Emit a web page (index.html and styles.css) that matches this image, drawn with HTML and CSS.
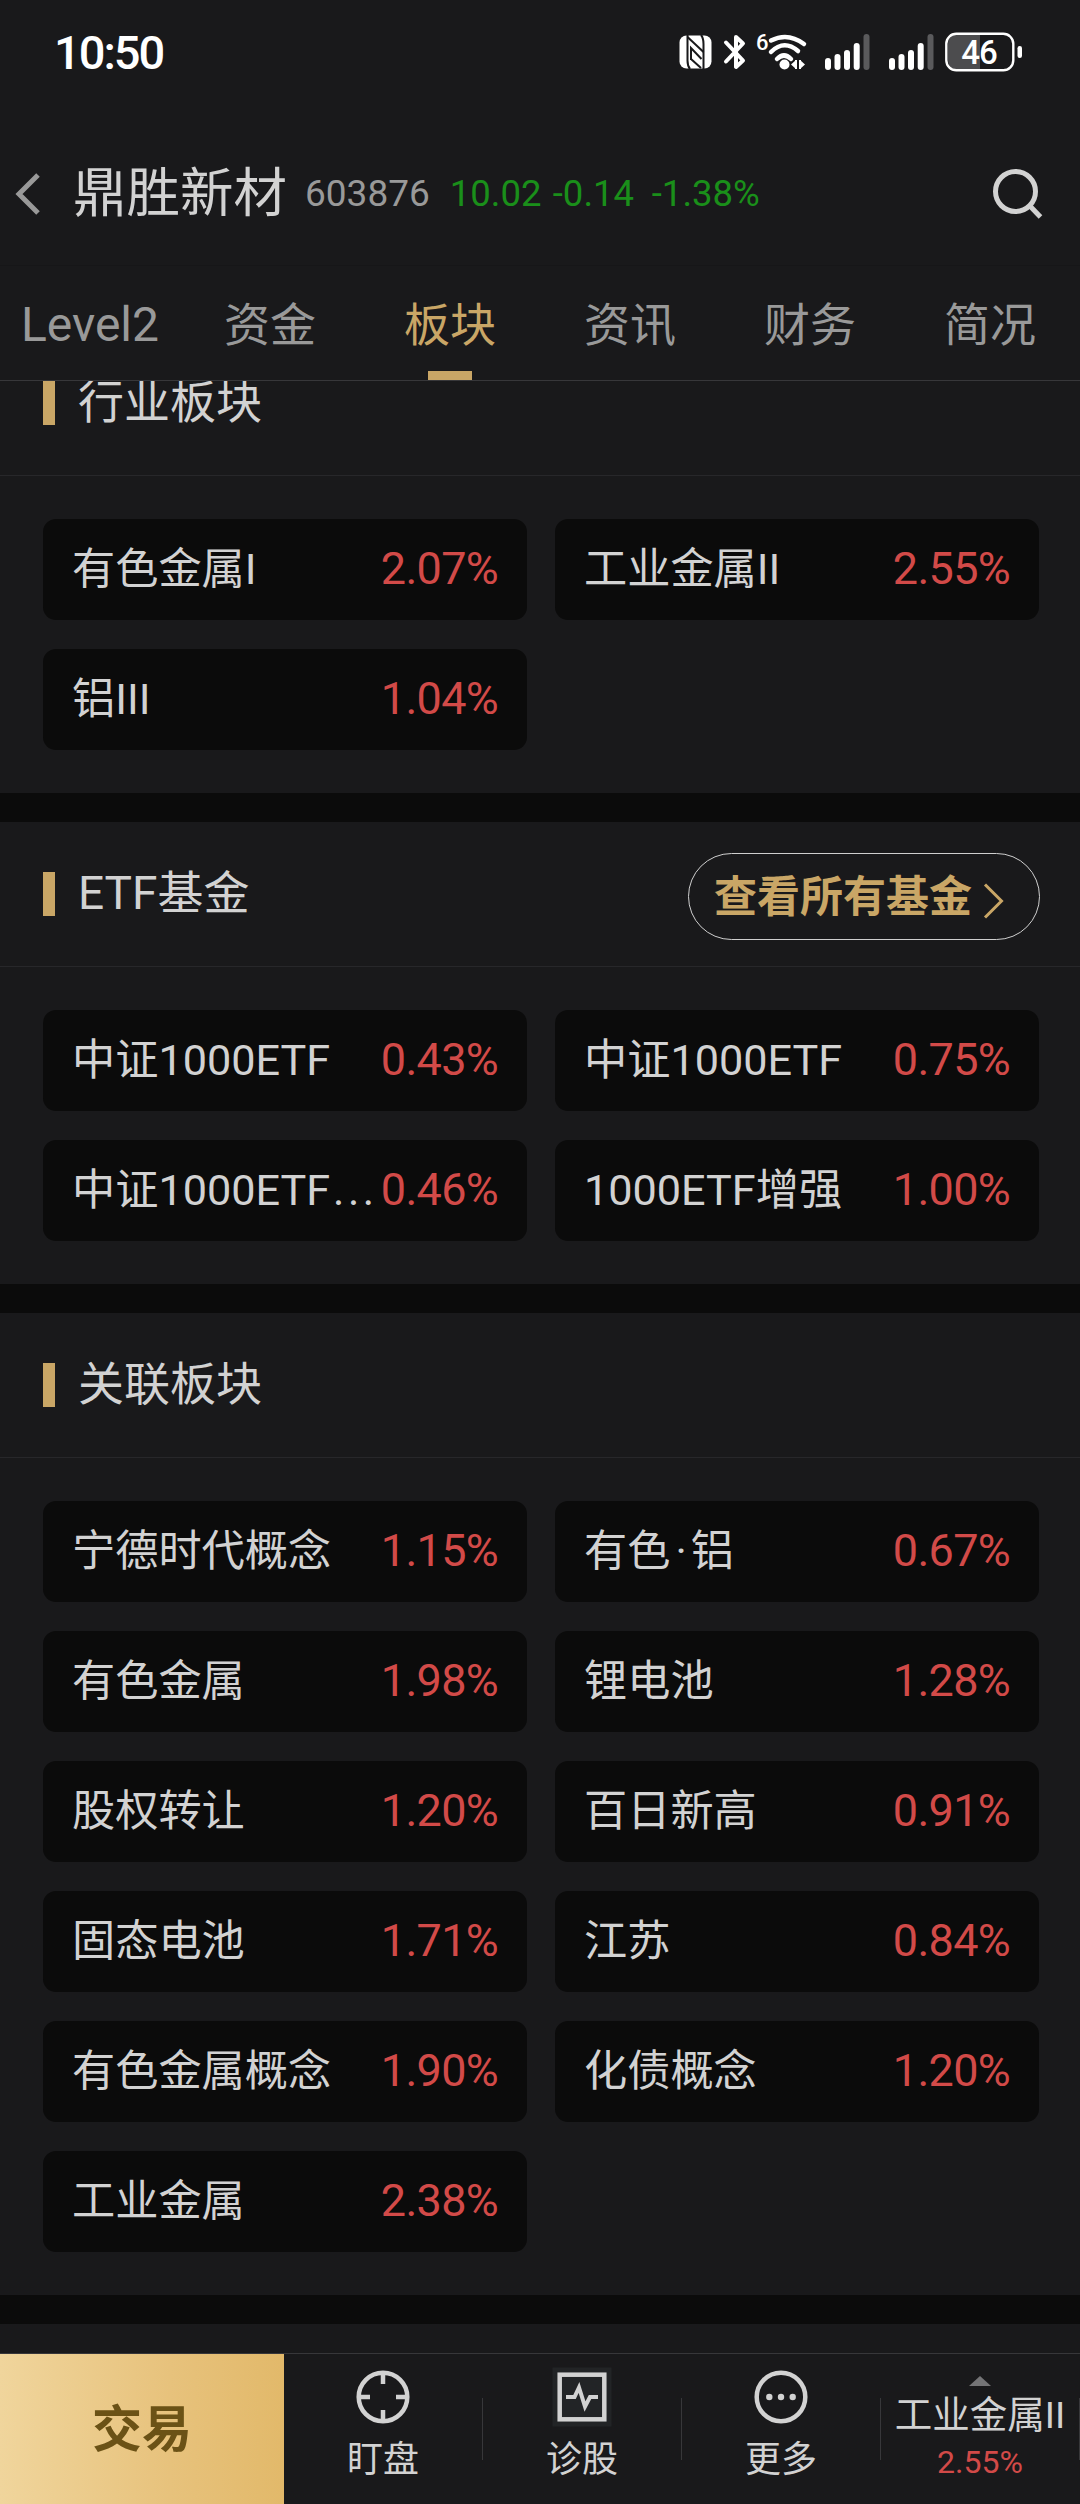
FILE: index.html
```html
<!DOCTYPE html>
<html lang="zh-CN">
<head>
    <meta charset="UTF-8">
    <meta name="viewport" content="width=device-width, initial-scale=1.0">
    <title>鼎胜新材 603876</title>
    <link rel="stylesheet" href="styles.css">
</head>
<body>
    <div id="app">
        <div class="status">
            <span class="hora">10:50</span>
            <div class="status-icons">
                <svg class="nfc" width="33" height="34" viewBox="0 0 33 34">
                    <rect x="0.5" y="0.5" width="32" height="33" rx="7" fill="#fff"/>
                    <path d="M8.500 0V25.500Q8.500 31 11 34M24.500 34V9Q24.500 3 22 0" fill="none" stroke="#19191b" stroke-width="2"/>
                    <path d="M8.500 2L24.500 17" stroke="#19191b" stroke-width="2"/>
                    <path d="M12 25V13L22.500 24" fill="none" stroke="#19191b" stroke-width="2"/>
                    <path d="M12 24L22 33" stroke="#19191b" stroke-width="2"/>
                </svg>
                <svg class="bt" width="24" height="38" viewBox="0 0 24 38">
                    <path d="M3 9.500L20 27.500L13 34V4L20 10.500L3 28.500" fill="none" stroke="#fff" stroke-width="4" stroke-linejoin="round" stroke-linecap="round"/>
                </svg>
                <svg class="wifi" width="52" height="40" viewBox="0 0 52 40">
                    <text x="-1" y="18" class="wifi-num">6</text>
                    <g fill="none" stroke="#fff" stroke-width="4.500" stroke-linecap="round">
                        <path d="M14 8.500Q31 0 47 12"/>
                        <path d="M14 20Q27 7 41 19"/>
                        <path d="M20 27Q27 20 34 27"/>
                    </g>
                    <circle cx="27.500" cy="32.500" r="5"/>
                    <path d="M34 32.500L39 28V37ZM48 32.500L43 28V37Z"/>
                    <path d="M38 28h2v9h-2zM42 28h2v9h-2z"/>
                </svg>
                <svg class="signal" width="45" height="36" viewBox="0 0 45 36">
                    <rect x="0" y="24" width="6" height="12" rx="3"/>
                    <rect x="9.500" y="20" width="6" height="16" rx="3"/>
                    <rect x="19" y="16" width="6" height="20" rx="3"/>
                    <rect x="28.700" y="9" width="6" height="27" rx="3"/>
                    <rect x="38.500" y="0" width="6" height="36" rx="3" fill="#5a5a5c"/>
                </svg>
                <svg class="signal" width="45" height="36" viewBox="0 0 45 36">
                    <rect x="0" y="24" width="6" height="12" rx="3"/>
                    <rect x="9.500" y="20" width="6" height="16" rx="3"/>
                    <rect x="19" y="16" width="6" height="20" rx="3"/>
                    <rect x="28.700" y="9" width="6" height="27" rx="3"/>
                    <rect x="38.500" y="0" width="6" height="36" rx="3" fill="#5a5a5c"/>
                </svg>
                <svg class="bateria" width="78" height="40" viewBox="0 0 78 40">
                    <path d="M35 2.500H13Q3 2.500 3 12V28Q3 37.500 13 37.500H35Z" fill="#4c4c4e"/>
                    <rect x="1.300" y="1.800" width="67" height="36.500" rx="10" fill="none" stroke="#fff" stroke-width="2.400"/>
                    <rect x="72.500" y="14" width="4.500" height="12" rx="2.200"/>
                    <text x="34" y="31.500" text-anchor="middle" class="bateria-num">46</text>
                </svg>
            </div>
        </div>

        <div class="cabecera">
            <svg class="volver" width="26" height="44" viewBox="0 0 26 44">
                <path d="M23 3L4 22L23 41" fill="none" stroke="#999" stroke-width="5"/>
            </svg>
            <h1>鼎胜新材</h1>
            <span class="codigo">603876</span>
            <div class="cotizacion">
                <span class="precio">10.02</span>
                <span class="cambio">-0.14</span>
                <span class="pct">-1.38%</span>
            </div>
            <svg class="buscar" width="50" height="50" viewBox="0 0 50 50">
                <circle cx="22.500" cy="22.500" r="20" fill="none" stroke="#d2d2d2" stroke-width="5"/>
                <path d="M36 36L47.500 48" stroke="#d2d2d2" stroke-width="5"/>
            </svg>
        </div>

        <div class="tabs">
            <a class="tab level">Level2</a>
            <a class="tab">资金</a>
            <a class="tab activo">板块</a>
            <a class="tab">资讯</a>
            <a class="tab">财务</a>
            <a class="tab">简况</a>
        </div>

        <div class="contenido">
            <section class="bloque">
                <div class="titulo"><h2>行业板块</h2></div>
                <div class="lista">
                    <div class="item"><span class="nombre">有色金属I</span><span class="valor">2.07%</span></div>
                    <div class="item"><span class="nombre">工业金属II</span><span class="valor">2.55%</span></div>
                    <div class="item"><span class="nombre">铝III</span><span class="valor">1.04%</span></div>
                </div>
            </section>

            <section class="bloque">
                <div class="titulo">
                    <h2>ETF基金</h2>
                    <button class="ver-todo"><span>查看所有基金</span>
                        <svg width="21" height="36" viewBox="0 0 21 36">
                            <path d="M2 1.500L18.500 18L2 34.500" fill="none" stroke="#c9a666" stroke-width="3"/>
                        </svg>
                    </button>
                </div>
                <div class="lista">
                    <div class="item"><span class="nombre">中证1000ETF</span><span class="valor">0.43%</span></div>
                    <div class="item"><span class="nombre">中证1000ETF</span><span class="valor">0.75%</span></div>
                    <div class="item"><span class="nombre">中证1000ETF<span class="puntos">...</span></span><span class="valor">0.46%</span></div>
                    <div class="item"><span class="nombre">1000ETF增强</span><span class="valor">1.00%</span></div>
                </div>
            </section>

            <section class="bloque">
                <div class="titulo"><h2>关联板块</h2></div>
                <div class="lista">
                    <div class="item"><span class="nombre">宁德时代概念</span><span class="valor">1.15%</span></div>
                    <div class="item"><span class="nombre">有色<span class="medio">·</span>铝</span><span class="valor">0.67%</span></div>
                    <div class="item"><span class="nombre">有色金属</span><span class="valor">1.98%</span></div>
                    <div class="item"><span class="nombre">锂电池</span><span class="valor">1.28%</span></div>
                    <div class="item"><span class="nombre">股权转让</span><span class="valor">1.20%</span></div>
                    <div class="item"><span class="nombre">百日新高</span><span class="valor">0.91%</span></div>
                    <div class="item"><span class="nombre">固态电池</span><span class="valor">1.71%</span></div>
                    <div class="item"><span class="nombre">江苏</span><span class="valor">0.84%</span></div>
                    <div class="item"><span class="nombre">有色金属概念</span><span class="valor">1.90%</span></div>
                    <div class="item"><span class="nombre">化债概念</span><span class="valor">1.20%</span></div>
                    <div class="item"><span class="nombre">工业金属</span><span class="valor">2.38%</span></div>
                </div>
            </section>
        </div>

        <div class="barra">
            <button class="operar">交易</button>
            <div class="accion">
                <svg width="60" height="60" viewBox="0 0 60 60">
                    <g fill="none" stroke="#d2d2d2" stroke-width="4.500">
                        <circle cx="30" cy="30" r="24.300"/>
                        <path d="M30 6V17M30 43V54M6 30H17M43 30H54"/>
                    </g>
                </svg>
                <span>盯盘</span>
            </div>
            <div class="accion">
                <svg width="60" height="60" viewBox="0 0 60 60">
                    <rect x="0.500" y="0.500" width="59" height="59" fill="#222426"/>
                    <rect x="7.700" y="7.700" width="44.600" height="44.600" fill="none" stroke="#d2d2d2" stroke-width="4.500"/>
                    <path d="M14 30H22.500L27 20.500L33 39.500L38 30H46" fill="none" stroke="#d2d2d2" stroke-width="4"/>
                </svg>
                <span>诊股</span>
            </div>
            <div class="accion">
                <svg width="60" height="60" viewBox="0 0 60 60">
                    <circle cx="30" cy="30" r="24.300" fill="none" stroke="#d2d2d2" stroke-width="4.500"/>
                    <g fill="#d2d2d2">
                        <circle cx="18.300" cy="30" r="3.200"/>
                        <circle cx="30" cy="30" r="3.200"/>
                        <circle cx="41.700" cy="30" r="3.200"/>
                    </g>
                </svg>
                <span>更多</span>
            </div>
            <div class="accion indice">
                <svg width="22" height="10" viewBox="0 0 22 10">
                    <path d="M0 10L11 0L22 10Z" fill="#747476"/>
                </svg>
                <span>工业金属II</span>
                <span class="sube">2.55%</span>
            </div>
        </div>
    </div>
</body>
</html>
```
FILE: styles.css
```css
* {
    box-sizing: border-box;
    font-family: Roboto, "Noto Sans CJK SC", sans-serif;
}
body {
    margin: 0;
    background-color: #19191b;
    color: #d2d2d2;
}
svg {
    display: block;
    flex: none;
    overflow: visible;
}
h1, h2 {
    margin: 0;
    font-weight: normal;
}
button {
    border: none;
    padding: 0;
    background: none;
}
#app {
    display: flex;
    flex-direction: column;
    width: 1080px;
    height: 2504px;
    overflow: hidden;
}

/* barra de estado */
.status {
    display: flex;
    justify-content: space-between;
    align-items: center;
    height: 104px;
    padding: 0 57px 0 54px;
}
.hora {
    color: white;
    font-size: 47px;
    font-weight: 500;
    letter-spacing: -2px;
}
.status-icons {
    display: flex;
    align-items: center;
    fill: white;
}
.bt {
    margin-left: 11px;
}
.wifi {
    margin-left: 10px;
}
.wifi-num {
    font-size: 22px;
    font-weight: 500;
}
.signal {
    margin-left: 19px;
}
.wifi + .signal {
    margin-left: 16px;
}
.bateria {
    margin-left: 11px;
}
.bateria-num {
    font-size: 33px;
    font-weight: 500;
    letter-spacing: -1px;
}

/* cabecera */
.cabecera {
    display: flex;
    align-items: center;
    height: 161px;
    padding: 18px 37px 0 15px;
}
.cabecera h1 {
    margin-left: 32px;
    font-size: 53.5px;
    line-height: 60px;
}
.codigo {
    margin-left: 18px;
    color: #999;
    font-size: 37px;
}
.cotizacion {
    display: flex;
    flex: 1;
    margin-left: 20px;
    color: #1a8f1a;
    font-size: 36.5px;
}
.precio {
    width: 103px;
}
.cambio {
    width: 99px;
}

/* pestañas */
.tabs {
    display: flex;
    flex: none;
    height: 116px;
    border-top: 1px solid #161618;
    border-bottom: 1px solid #37373a;
}
.tab {
    position: relative;
    flex: 1;
    color: #999;
    font-size: 46px;
    line-height: 118px;
    text-align: center;
}
.level {
    font-size: 48px;
}
.activo {
    color: #c9a666;
}
.activo::after {
    content: "";
    position: absolute;
    left: 68px;
    bottom: 0;
    width: 44px;
    height: 9px;
    background-color: #c9a666;
}

/* contenido */
.contenido {
    flex: 1;
    min-height: 0;
    overflow: hidden;
}
.bloque {
    border-bottom: 29px solid #0b0b0b;
}
.bloque:first-child {
    margin-top: -50px;
}
.titulo {
    display: flex;
    justify-content: space-between;
    align-items: center;
    height: 145px;
    padding: 0 40px 0 43px;
    border-bottom: 1px solid #27272a;
}
.titulo h2 {
    padding-left: 23px;
    border-left: 12px solid #c9a666;
    font-size: 46px;
    line-height: 42px;
    padding-bottom: 2px;
}
.ver-todo {
    display: flex;
    align-items: center;
    width: 352px;
    height: 87px;
    margin-top: 5px;
    padding-left: 25px;
    border: 1px solid #cfcfcf;
    border-radius: 44px;
    color: #c9a666;
    font-size: 43px;
    font-weight: bold;
}
.ver-todo span {
    padding-bottom: 7px;
}
.ver-todo svg {
    margin: 8px 0 0 11px;
}
.lista {
    display: grid;
    grid-template-columns: 484px 484px;
    gap: 29px 28px;
    padding: 43px;
}
.item {
    display: flex;
    justify-content: space-between;
    align-items: center;
    height: 101px;
    padding: 0 29px 3px 29px;
    border-radius: 13px;
    background-color: #0b0b0b;
    white-space: nowrap;
}
.nombre {
    padding-bottom: 6px;
    font-size: 43.2px;
}
.puntos {
    margin-left: 3px;
    letter-spacing: 3.5px;
}
.medio {
    margin: 0 4px 0 5px;
}
.valor {
    color: #d24a48;
    font-size: 45px;
    letter-spacing: -0.7px;
}

/* barra inferior */
.barra {
    display: flex;
    flex: none;
    height: 151px;
    border-top: 1px solid #37373a;
}
.operar {
    width: 284px;
    padding-bottom: 8px;
    background: linear-gradient(to right, #f0d59c, #e7c27c 60%, #e2b96a);
    color: #6b5216;
    font-size: 50px;
    font-weight: bold;
}
.accion {
    position: relative;
    display: flex;
    flex: 1;
    flex-direction: column;
    align-items: center;
    padding: 13px 1px 0 0;
    font-size: 36px;
    line-height: 66px;
    white-space: nowrap;
}
.accion::after {
    content: "";
    position: absolute;
    right: 0;
    top: 44px;
    width: 1px;
    height: 62px;
    background-color: #37373a;
}
.indice {
    padding-top: 22px;
    font-size: 37.5px;
    line-height: 58px;
}
.sube {
    color: #d24a48;
    font-size: 32px;
    line-height: 36px;
}
```
